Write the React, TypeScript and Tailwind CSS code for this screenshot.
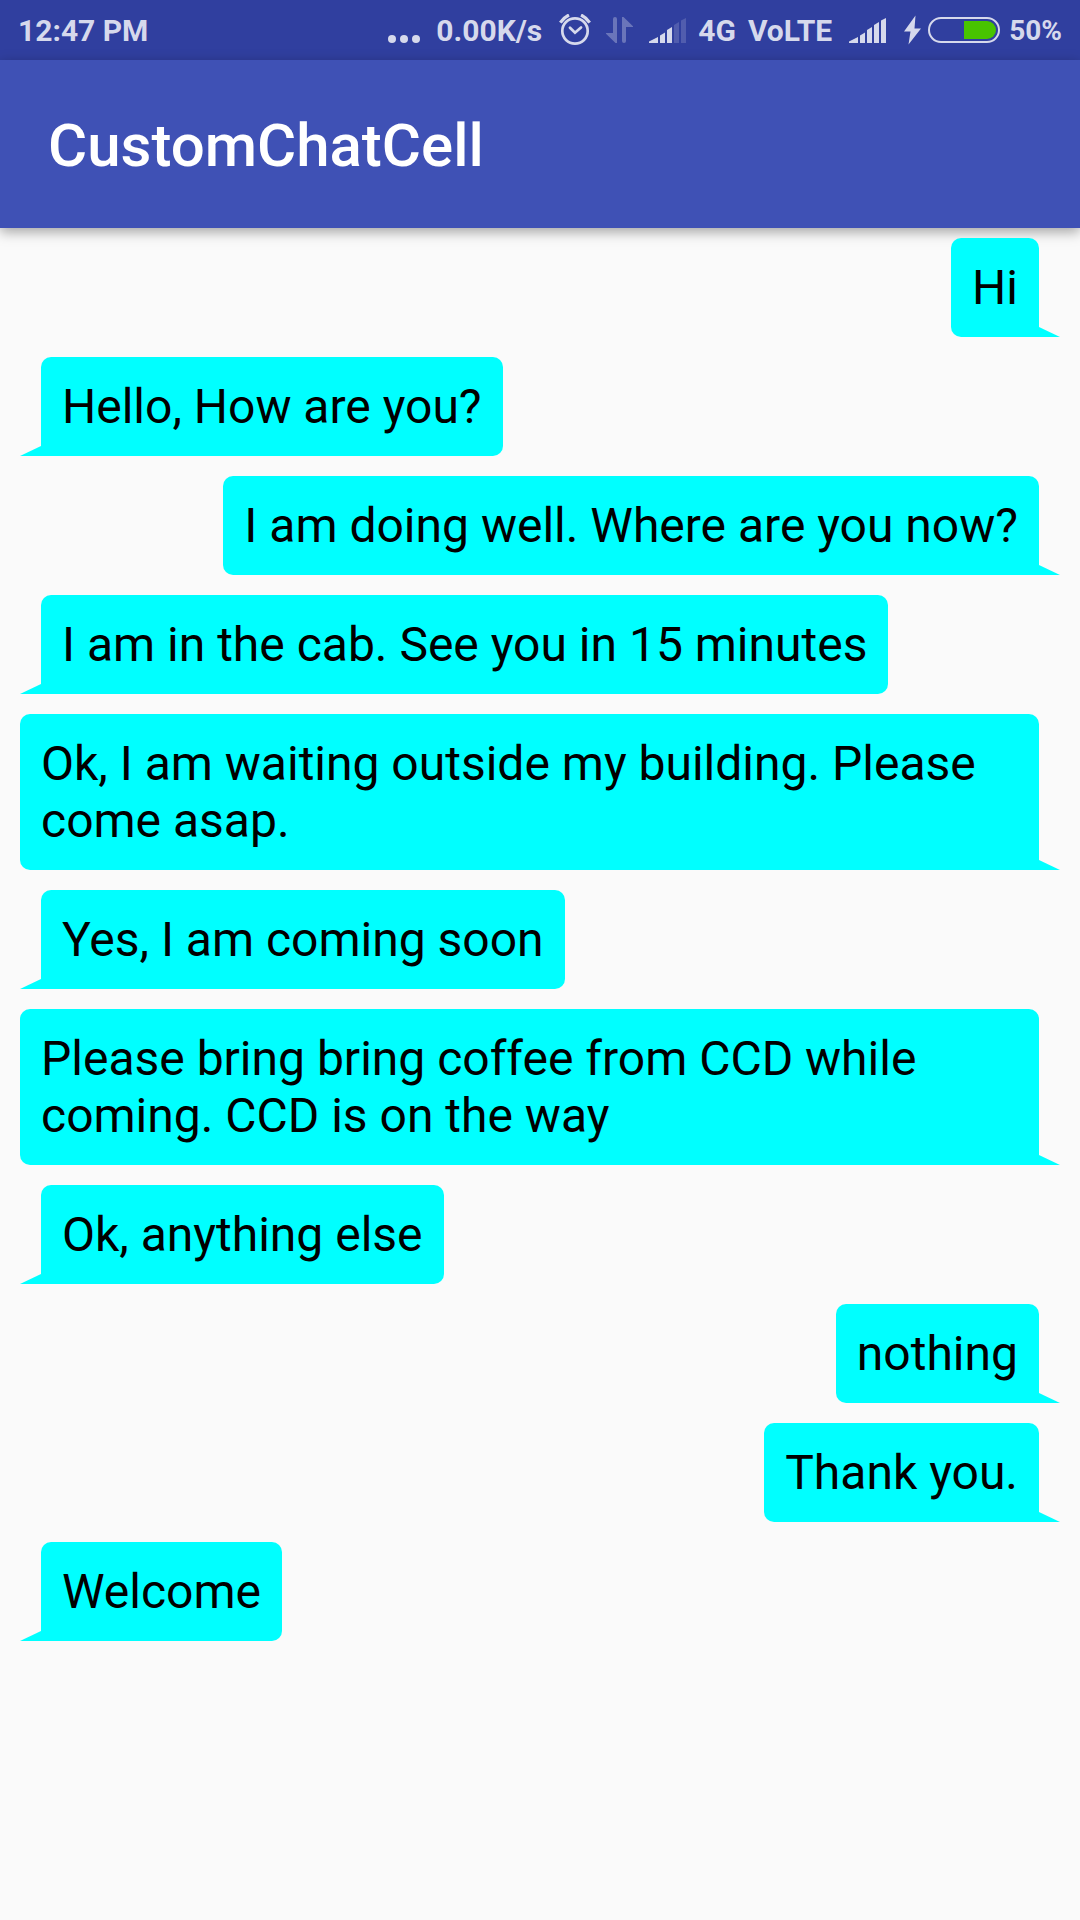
type Side = "left" | "right";

const messages: { side: Side; text: string }[] = [
  { side: "right", text: "Hi" },
  { side: "left", text: "Hello, How are you?" },
  { side: "right", text: "I am doing well. Where are you now?" },
  { side: "left", text: "I am in the cab. See you in 15 minutes" },
  { side: "right", text: "Ok, I am waiting outside my building. Please come asap." },
  { side: "left", text: "Yes, I am coming soon" },
  { side: "right", text: "Please bring bring coffee from CCD while coming. CCD is on the way" },
  { side: "left", text: "Ok, anything else" },
  { side: "right", text: "nothing" },
  { side: "right", text: "Thank you." },
  { side: "left", text: "Welcome" },
];

function MoreDots() {
  return (
    <svg className="h-8 w-8 shrink-0" viewBox="0 0 32 32" fill="currentColor" aria-hidden="true">
      <circle cx="4" cy="25" r="4" />
      <circle cx="16" cy="25" r="4" />
      <circle cx="28" cy="25" r="4" />
    </svg>
  );
}

function AlarmIcon() {
  return (
    <svg className="h-8 w-8 shrink-0" viewBox="0 0 32 32" fill="none" stroke="currentColor" aria-hidden="true">
      <circle cx="16" cy="17" r="12.7" strokeWidth="2.7" />
      <path d="M11 13.8 16 18.700l6-5.200" strokeWidth="2.8" strokeLinecap="round" />
      <path d="M1.300 8.600Q4.500 3.600 10 1" strokeWidth="3.2" />
      <path d="M30.700 8.600Q27.500 3.600 22 1" strokeWidth="3.2" />
    </svg>
  );
}

function DataArrows() {
  return (
    <svg className="h-8 w-7 shrink-0 opacity-35" viewBox="0 0 28 32" fill="currentColor" aria-hidden="true">
      <path d="M7 5a2 2 0 0 1 4 0v24H9.500L0 19.800V19h7z" />
      <path d="M16 3h1.500L27 12.200V13h-7v14a2 2 0 0 1-4 0z" />
    </svg>
  );
}

function SignalIcon({ level }: { level: number }) {
  const bars = [
    "M0 29v-1.500L9 23v6z",
    "M11 21.500l5-3V29h-5z",
    "M18 16l5-3V29h-5z",
    "M25 11l5-3V29h-5z",
    "M32 6.500l5-2.500V29h-5z",
  ];
  return (
    <svg className="h-8 w-[37px] shrink-0" viewBox="0 0 37 32" fill="currentColor" aria-hidden="true">
      {bars.map((d, i) => (
        <path key={d} d={d} fillOpacity={i < level ? 1 : 0.2} />
      ))}
    </svg>
  );
}

function BoltIcon() {
  return (
    <svg className="h-8 w-[17px] shrink-0" viewBox="0 0 17 32" fill="currentColor" aria-hidden="true">
      <path d="M11.500 1.500 0 17.500h6.500L4.500 30.500 17 14.500h-6.500z" />
    </svg>
  );
}

function BatteryIcon() {
  return (
    <svg className="h-8 w-[72px] shrink-0" viewBox="0 0 72 32" aria-hidden="true">
      <rect x="1" y="4" width="70" height="24" rx="12" fill="none" stroke="currentColor" strokeWidth="2" />
      <path d="M36 7h23a9 9 0 0 1 0 18H36z" fill="#48c400" />
    </svg>
  );
}

function StatusBar() {
  return (
    <div className="flex h-[60px] items-center justify-between bg-[#303f9f] px-[18px] text-[30px] leading-none font-bold whitespace-nowrap text-[#d6d9ec]">
      <time className="pt-0.5">12:47 PM</time>
      <div className="flex items-center">
        <MoreDots />
        <span className="ml-4 pt-0.5">0.00K/s</span>
        <span className="ml-[17px] flex items-center gap-[15px]">
          <AlarmIcon />
          <DataArrows />
          <SignalIcon level={3} />
        </span>
        <span className="ml-3 pt-0.5">4G</span>
        <span className="ml-3 pt-0.5">VoLTE</span>
        <span className="ml-[17px] flex">
          <SignalIcon level={5} />
        </span>
        <span className="mr-[9px] ml-[18px] flex gap-[7px]">
          <BoltIcon />
          <BatteryIcon />
        </span>
        <span className="pt-0.5 text-[28px]">50%</span>
      </div>
    </div>
  );
}

function Bubble({ side, text }: { side: Side; text: string }) {
  const left = side === "left";
  return (
    <li className={left ? "flex items-end self-start" : "flex items-end self-end"}>
      {left && (
        <svg className="h-[10px] w-[21px] shrink-0" viewBox="0 0 21 10" fill="#00ffff" aria-hidden="true">
          <path d="M21 0v10H0z" />
        </svg>
      )}
      <p className={left ? "rounded-[10px] rounded-bl-none bg-[#00ffff] p-[21px]" : "rounded-[10px] rounded-br-none bg-[#00ffff] p-[21px]"}>
        {text}
      </p>
      {!left && (
        <svg className="h-[10px] w-[21px] shrink-0" viewBox="0 0 21 10" fill="#00ffff" aria-hidden="true">
          <path d="M0 0v10h21z" />
        </svg>
      )}
    </li>
  );
}

export default function App() {
  return (
    <div className="flex min-h-screen flex-col bg-[#fafafa] font-[Roboto,sans-serif]">
      <StatusBar />
      <header className="flex h-[168px] items-center bg-[#3f51b5] px-12 pt-1 shadow-[0_4px_12px_rgba(0,0,0,0.35)]">
        <h1 className="text-[60px] leading-[72px] font-medium text-white">CustomChatCell</h1>
      </header>
      <main className="px-5 py-[10px]">
        <ul className="flex flex-col gap-5 text-[48px] leading-[57px] text-black">
          {messages.map((m) => (
            <Bubble key={m.text} side={m.side} text={m.text} />
          ))}
        </ul>
      </main>
    </div>
  );
}
